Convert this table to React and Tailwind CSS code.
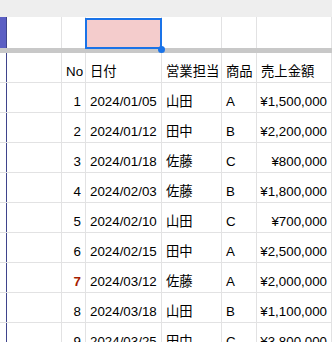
const rows = [
  [1, "2024/01/05", "山田", "A", "¥1,500,000"],
  [2, "2024/01/12", "田中", "B", "¥2,200,000"],
  [3, "2024/01/18", "佐藤", "C", "¥800,000"],
  [4, "2024/02/03", "佐藤", "B", "¥1,800,000"],
  [5, "2024/02/10", "山田", "C", "¥700,000"],
  [6, "2024/02/15", "田中", "A", "¥2,500,000"],
  [7, "2024/03/12", "佐藤", "A", "¥2,000,000"],
  [8, "2024/03/18", "山田", "B", "¥1,100,000"],
  [9, "2024/03/25", "田中", "C", "¥3,800,000"],
];

const cell = "flex h-full shrink-0 items-end whitespace-nowrap border-r border-[#e2e2e3] px-[4px] pb-[2px]";

function Row({ no, date, rep, item, amount, header, red }) {
  return (
    <div className="flex h-[30px] border-b border-[#e2e2e3]">
      <div className="h-full w-[7px] shrink-0 border-r border-[#3f448c]" />
      <div className={`${cell} w-[55px]`} />
      <div className={`${cell} w-[24px] ${header ? "justify-start" : "justify-end"}`}>
        <span className={red ? "font-bold text-[#a61c00]" : ""}>{no}</span>
      </div>
      <div className={`${cell} w-[76px]`}>{date}</div>
      <div className={`${cell} w-[60px]`}>{rep}</div>
      <div className={`${cell} w-[35px]`}>{item}</div>
      <div className={`${cell} w-[75px] ${header ? "justify-start" : "justify-end"}`}>{amount}</div>
    </div>
  );
}

export default function App() {
  return (
    <div
      className="h-[342px] w-[332px] overflow-hidden bg-white text-[13.33px] leading-[16px] text-black"
      style={{ fontFamily: '"Liberation Sans", Arial, "Noto Sans CJK JP", sans-serif' }}
    >
      <div className="h-[17px] bg-[#eeeeee]" />

      <div className="flex h-[31px]">
        <div className="h-full w-[7px] shrink-0 border-r border-[#3f448c] bg-[#5b5fc4]" />
        <div className="h-full w-[55px] shrink-0 border-r border-[#e2e2e3]" />
        <div className="h-full w-[24px] shrink-0 border-r border-[#e2e2e3]" />
        <div className="relative z-10 h-full w-[76px] shrink-0 border-r border-[#e2e2e3]">
          <div className="absolute -left-px top-px h-[31px] w-[77px] border-2 border-[#1a73e8] bg-[#f4cccc]" />
          <div className="absolute left-[71.5px] top-[28.5px] h-[7px] w-[7px] rounded-full bg-[#1a73e8]" />
        </div>
        <div className="h-full w-[60px] shrink-0 border-r border-[#e2e2e3]" />
        <div className="h-full w-[35px] shrink-0 border-r border-[#e2e2e3]" />
        <div className="h-full w-[75px] shrink-0 border-r border-[#e2e2e3]" />
      </div>

      <div className="h-[5px] bg-[#c8c8c8]" />

      <Row header no="No" date="日付" rep="営業担当" item="商品" amount="売上金額" />
      {rows.map(([no, date, rep, item, amount]) => (
        <Row key={no} no={no} date={date} rep={rep} item={item} amount={amount} red={no === 7} />
      ))}
    </div>
  );
}
